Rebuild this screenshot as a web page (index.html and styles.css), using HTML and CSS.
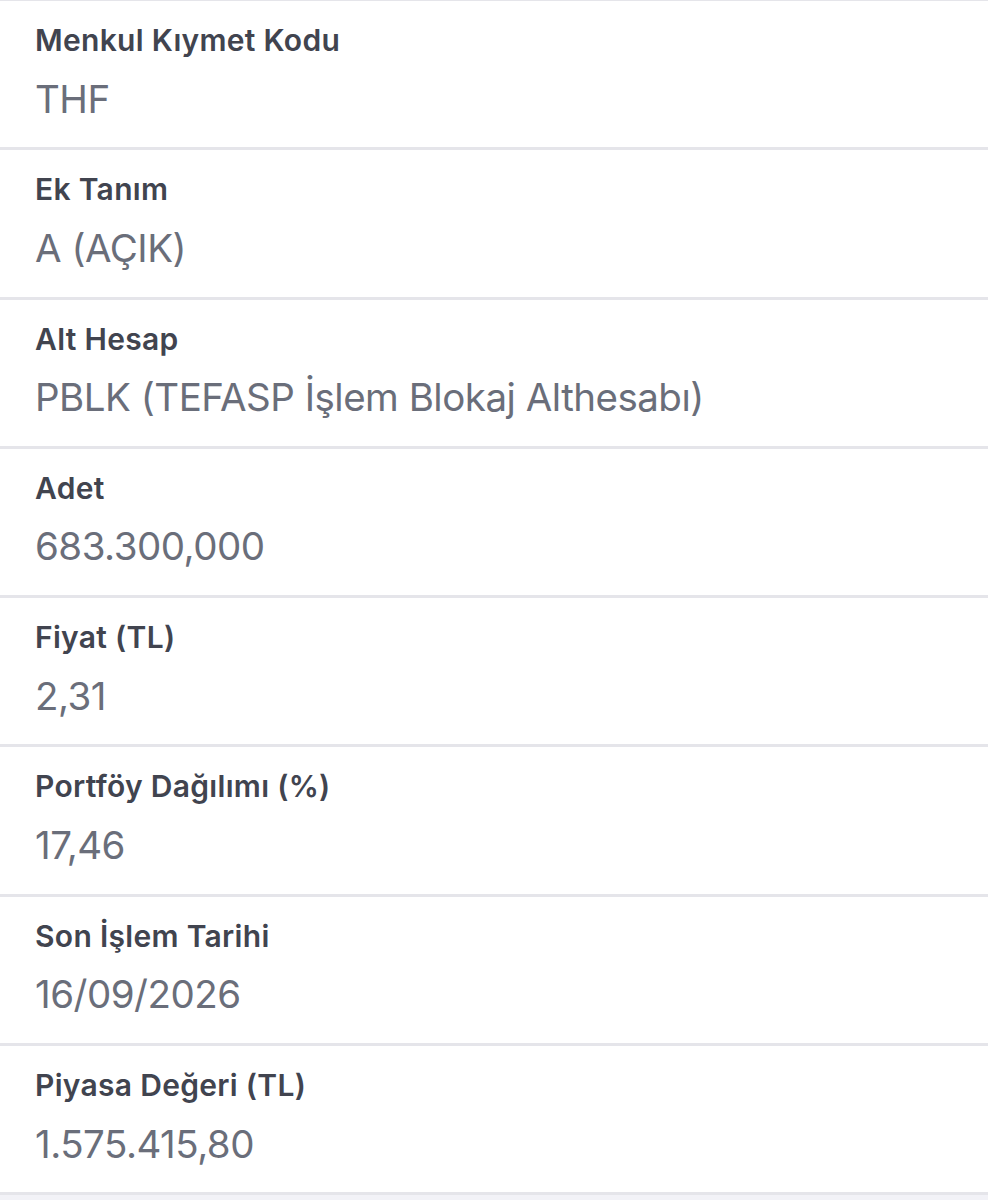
FILE: index.html
```html
<!DOCTYPE html>
<html lang="tr">
<head>
  <meta charset="UTF-8" />
  <meta name="viewport" content="width=device-width, initial-scale=1.0" />
  <title>Menkul Kıymet Detayı</title>
  <link rel="stylesheet" href="styles.css">
</head>
<body>
  <ul class="detail-list">
    <li class="detail-row">
      <div class="detail-label">Menkul Kıymet Kodu</div>
      <div class="detail-value">THF</div>
    </li>
    <li class="detail-row">
      <div class="detail-label">Ek Tanım</div>
      <div class="detail-value">A (AÇIK)</div>
    </li>
    <li class="detail-row">
      <div class="detail-label">Alt Hesap</div>
      <div class="detail-value">PBLK (TEFASP İşlem Blokaj Althesabı)</div>
    </li>
    <li class="detail-row">
      <div class="detail-label">Adet</div>
      <div class="detail-value">683.300,000</div>
    </li>
    <li class="detail-row">
      <div class="detail-label">Fiyat (TL)</div>
      <div class="detail-value">2,31</div>
    </li>
    <li class="detail-row">
      <div class="detail-label">Portföy Dağılımı (%)</div>
      <div class="detail-value">17,46</div>
    </li>
    <li class="detail-row">
      <div class="detail-label">Son İşlem Tarihi</div>
      <div class="detail-value">16/09/2026</div>
    </li>
    <li class="detail-row">
      <div class="detail-label">Piyasa Değeri (TL)</div>
      <div class="detail-value">1.575.415,80</div>
    </li>
  </ul>
</body>
</html>
```

FILE: styles.css
```css
:root {
  --page-bg: #f2f2f7;
  --row-bg: #ffffff;
  --separator: #e5e5ea;
  --label-color: #41444f;
  --value-color: #6a6e7a;
}

body {
  margin: 0;
  padding: 0;
  background-color: var(--page-bg);
  font-family: Inter, "Noto Sans", "DejaVu Sans", sans-serif;
  min-height: 100vh;
}

.detail-list {
  list-style: none;
  margin: 0;
  padding: 0;
  background-color: var(--row-bg);
  border-top: 1px solid var(--separator);
}

.detail-row {
  height: 146.3px;
  box-sizing: content-box;
  padding: 0 35px;
  border-bottom: 3px solid var(--separator);
}

.detail-label {
  padding-top: 22px;
  font-size: 30px;
  line-height: 35px;
  font-weight: 600;
  letter-spacing: 0.3px;
  color: var(--label-color);
}

.detail-value {
  margin-top: 17.5px;
  font-size: 38.5px;
  line-height: 47px;
  font-weight: 400;
  letter-spacing: -0.5px;
  color: var(--value-color);
}
```
